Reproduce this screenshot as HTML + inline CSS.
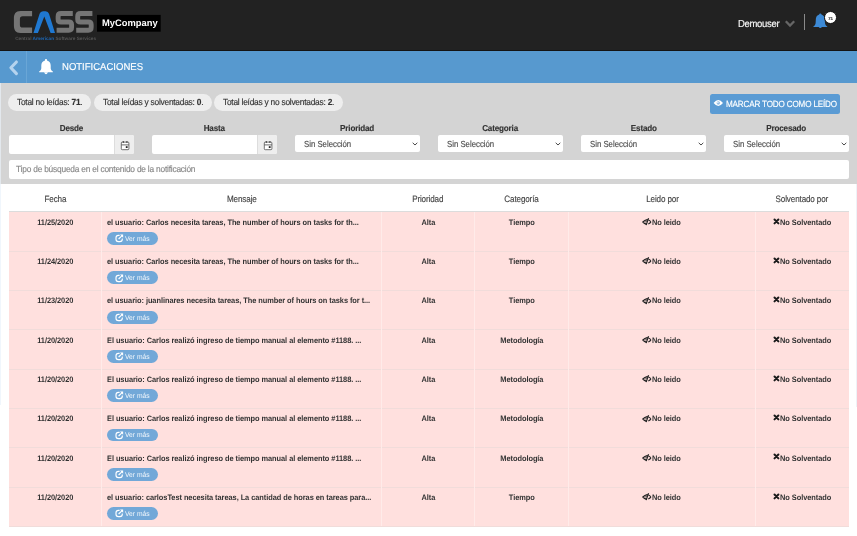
<!DOCTYPE html>
<html><head><meta charset="utf-8">
<style>
*{box-sizing:border-box;margin:0;padding:0}
html,body{width:857px;height:536px;overflow:hidden;background:#fff;font-family:"Liberation Sans",sans-serif;text-rendering:geometricPrecision;-webkit-text-stroke-width:0.15px}
.abs{position:absolute}
#top{position:absolute;left:0;top:0;width:857px;height:51px;background:#222;border-bottom:1px solid #141414}
#bar{position:absolute;left:0;top:51px;width:857px;height:32px;background:#5799cf}
#grey{position:absolute;left:0;top:83px;width:857px;height:101px;background:#d4d4d4}
.t{position:absolute;white-space:nowrap;line-height:1}
.pill{position:absolute;top:94px;height:17px;border-radius:9px;background:#eee;color:#333;font-size:8.9px;line-height:17.6px;padding-left:9px;white-space:nowrap}
.pill span{display:inline-block;transform:scaleX(0.94);transform-origin:0 50%;letter-spacing:-0.245px}
.lbl{position:absolute;top:123.9px;font-weight:bold;font-size:8.6px;color:#333;text-align:center;width:125px;line-height:8px;--sx:0.94;letter-spacing:-0.17px}
.sq{display:inline-block;transform:scaleX(var(--sx));transform-origin:50% 50%}
.sql{display:inline-block;transform:scaleX(var(--sx));transform-origin:0 50%}
.date{position:absolute;top:135px;height:19px;width:125px;background:#fff;border-radius:2px}
.date .add{position:absolute;right:0;top:0;width:19.7px;height:19px;background:#eee;border-left:1px solid #ddd;border-radius:0 2px 2px 0}
.sel{position:absolute;top:134.6px;height:17.8px;width:125px;background:#fff;border-radius:2px;font-size:8.9px;color:#4d4d4d;line-height:19.3px;padding-left:8.8px}
.sel svg{position:absolute;right:2px;top:7.6px}
#search{position:absolute;left:9px;top:160.2px;width:840px;height:18.4px;background:#fff;border-radius:2px;font-size:8.9px;color:#888;line-height:19.4px;padding-left:7px;white-space:nowrap;--sx:0.94;letter-spacing:-0.22px}
#thead{position:absolute;left:9px;top:184px;width:840px;height:28px;background:#fff;border-bottom:1px solid #dcdcdc}
.th{position:absolute;top:195px;font-size:9.2px;color:#444;text-align:center;line-height:8px;--sx:0.88;letter-spacing:-0.15px}
.row{position:absolute;left:9px;width:840px;height:39.4px;background:#ffe0de;border-top:1px solid #f1dcda}
.vd{position:absolute;top:212px;width:1px;height:314px;background:#ffebe9}
.c{position:absolute;-webkit-text-stroke-width:0;font-weight:bold;font-size:7.9px;color:#333;line-height:8px;white-space:nowrap;--sx:0.94;letter-spacing:-0.06px}
.ctr{text-align:center}
.ver{position:absolute;left:107px;width:51px;height:12.8px;border-radius:7px;background:#72a8d8;color:#f2f7fc;font-size:7.0px;line-height:12.8px;--sx:0.96;-webkit-text-stroke-width:0}
</style></head><body><div id="wrap" style="position:absolute;left:0;top:0;width:857px;height:536px;overflow:hidden;will-change:transform">
<div id="top"></div>
<!-- logo -->
<svg class="abs" style="left:0;top:0" width="170" height="50" viewBox="0 0 170 50">
 <path d="M32.1,10.9 H20.5 C15.6,10.9 13.9,13.8 13.9,18.6 V25.3 C13.9,30.1 15.6,33 20.5,33 H32.1 V27.6 H22.6 Q19.9,27.6 19.9,24.9 V19 Q19.9,16.3 22.6,16.3 H32.1 Z" fill="#757575"/>
 <path d="M33.5,33 L39.6,13.8 Q40.4,11.2 43,11.2 H45.6 Q48.2,11.2 49,13.8 L55,33 H50.6 L44.3,16.6 L37.9,33 Z" fill="#1f78d1"/>
 <path d="M72.8,13.5 H61 Q58.1,13.5 58.1,16.4 V19.2 Q58.1,22 61,22 H68.8 Q71.6,22 71.6,24.8 V27.3 Q71.6,30.2 68.8,30.2 H56.6" fill="none" stroke="#757575" stroke-width="4.9"/>
 <path d="M92.4,13.5 H80.6 Q77.7,13.5 77.7,16.4 V19.2 Q77.7,22 80.6,22 H88.4 Q91.2,22 91.2,24.8 V27.3 Q91.2,30.2 88.4,30.2 H76.2" fill="none" stroke="#757575" stroke-width="4.9"/>
 <text x="15.2" y="39.5" font-family="Liberation Sans" font-weight="bold" font-size="4.73" fill="#555">Central <tspan fill="#1d66b3">American</tspan> Software Services</text>
 <rect x="97" y="14.9" width="63.7" height="16.8" fill="#000"/>
 <text x="102" y="26.4" font-family="Liberation Sans" font-weight="bold" font-size="9.37" fill="#fff">MyCompany</text>
</svg>
<div class="t" style="left:737.6px;top:19.6px;font-size:10.2px;color:#fafafa;transform:scaleX(0.93);letter-spacing:-0.33px;-webkit-text-stroke:0.15px #fafafa;transform-origin:0 0">Demouser</div>
<svg class="abs" style="left:784px;top:19px" width="12" height="9" viewBox="0 0 12 9"><path d="M1.8,2.2 L6,6.5 L10.2,2.2" fill="none" stroke="#666" stroke-width="2.3"/></svg>
<div class="abs" style="left:804px;top:14px;width:1px;height:16px;background:#8a8a8a"></div>
<svg class="abs" style="left:808px;top:8px" width="24" height="24" viewBox="0 0 24 24">
 <circle cx="12.3" cy="6.5" r="1.1" fill="#3d8ad6"/>
 <path d="M12.3,6.6 C9.2,6.6 7.9,9 7.8,12 L7.6,15.2 C7.4,16.8 6.4,17.6 5.3,18.5 L5.4,19 H19.2 L19.3,18.5 C18.2,17.6 17.2,16.8 17,15.2 L16.8,12 C16.7,9 15.4,6.6 12.3,6.6 Z" fill="#3d8ad6"/>
 <path d="M10.4,18.6 Q12.3,21.6 14.2,18.6 Z" fill="#3d8ad6"/>
</svg>
<div class="abs" style="left:824.3px;top:11.1px;width:12.6px;height:12.6px;border-radius:50%;background:#fff;border:1px solid #111;color:#444;font-size:4.3px;font-weight:bold;text-align:center;line-height:13.4px">71</div>

<div id="bar"></div>
<div class="abs" style="left:26px;top:51px;width:1px;height:32px;background:#6aa6d6"></div>
<svg class="abs" style="left:0;top:51px" width="30" height="32" viewBox="0 0 30 32"><path d="M16.4,11 L10.9,16.8 L16.4,22.6" fill="none" stroke="#b5d3ee" stroke-width="3.1" stroke-linecap="round" stroke-linejoin="round"/></svg>
<svg class="abs" style="left:38px;top:58px" width="16" height="18" viewBox="0 0 16 18">
 <path d="M8,1 C7.4,1 7,1.4 7,2 V2.6 C4.6,3.1 3.3,5 3.3,7.6 V10.2 C3.3,11.8 2.2,12.7 1.1,13.5 V14.3 H14.9 V13.5 C13.8,12.7 12.7,11.8 12.7,10.2 V7.6 C12.7,5 11.4,3.1 9,2.6 V2 C9,1.4 8.6,1 8,1 Z" fill="#fff"/>
 <path d="M6,14.2 Q8,18.2 10,14.2 Z" fill="#fff"/>
</svg>
<div class="t" style="left:61.6px;top:62.9px;font-size:10.0px;color:#fff;--sx:0.953"><span class="sql">NOTIFICACIONES</span></div>

<div id="grey"></div>
<div class="abs" style="left:0;top:83px;width:1.2px;height:101px;background:#e3e8ed"></div>
<div class="pill" style="left:8.4px;width:83px"><span>Total no leídas: <b>71</b>.</span></div>
<div class="pill" style="left:93.6px;width:118.7px"><span>Total leídas y solventadas: <b>0</b>.</span></div>
<div class="pill" style="left:214.4px;width:129px"><span>Total leídas y no solventadas: <b>2</b>.</span></div>

<div class="abs" style="left:710px;top:94.2px;width:130px;height:19.6px;background:#5a9bd4;border-radius:2.5px"></div>
<svg class="abs" style="left:713px;top:99.4px" width="11" height="8" viewBox="0 0 11 8">
 <path d="M0.6,4 Q5.3,-1.8 10,4 Q5.3,9.8 0.6,4 Z" fill="#fff"/>
 <circle cx="5.3" cy="4" r="1.7" fill="#8fbbe3"/><circle cx="4.9" cy="3.6" r="0.7" fill="#fff"/>
</svg>
<div class="t" style="left:725.6px;top:100.2px;font-size:9.0px;color:#fff;--sx:0.9;letter-spacing:-0.18px"><span class="sql">MARCAR TODO COMO LEÍDO</span></div>

<div class="lbl" style="left:9px"><span class="sq">Desde</span></div>
<div class="lbl" style="left:152px"><span class="sq">Hasta</span></div>
<div class="lbl" style="left:295px"><span class="sq">Prioridad</span></div>
<div class="lbl" style="left:438px"><span class="sq">Categoria</span></div>
<div class="lbl" style="left:581px"><span class="sq">Estado</span></div>
<div class="lbl" style="left:724px"><span class="sq">Procesado</span></div>

<div class="date" style="left:9px"><div class="add"></div></div>
<div class="date" style="left:152px"><div class="add"></div></div>
<svg class="abs" style="left:120px;top:140px" width="10" height="11" viewBox="0 0 10 11"><rect x="1.3" y="2.1" width="7.6" height="7.6" rx="0.9" fill="#fff" stroke="#5a5a5a" stroke-width="0.85"/><path d="M1.3,4.9 H8.9" stroke="#5a5a5a" stroke-width="0.9"/><path d="M3.3,1 V3 M6.9,1 V3" stroke="#4a4a4a" stroke-width="1.1"/><rect x="5.8" y="6.2" width="1.8" height="1.8" fill="#222"/></svg>
<svg class="abs" style="left:263px;top:140px" width="10" height="11" viewBox="0 0 10 11"><rect x="1.3" y="2.1" width="7.6" height="7.6" rx="0.9" fill="#fff" stroke="#5a5a5a" stroke-width="0.85"/><path d="M1.3,4.9 H8.9" stroke="#5a5a5a" stroke-width="0.9"/><path d="M3.3,1 V3 M6.9,1 V3" stroke="#4a4a4a" stroke-width="1.1"/><rect x="5.8" y="6.2" width="1.8" height="1.8" fill="#222"/></svg>

<div class="sel" style="left:295px"><span style="display:inline-block;transform:scaleX(0.877);transform-origin:0 0">Sin Selección</span><svg width="6" height="4" viewBox="0 0 6 4"><path d="M0.7,0.8 L3,3 L5.3,0.8" fill="none" stroke="#333" stroke-width="0.9"/></svg></div>
<div class="sel" style="left:438px"><span style="display:inline-block;transform:scaleX(0.877);transform-origin:0 0">Sin Selección</span><svg width="6" height="4" viewBox="0 0 6 4"><path d="M0.7,0.8 L3,3 L5.3,0.8" fill="none" stroke="#333" stroke-width="0.9"/></svg></div>
<div class="sel" style="left:581px"><span style="display:inline-block;transform:scaleX(0.877);transform-origin:0 0">Sin Selección</span><svg width="6" height="4" viewBox="0 0 6 4"><path d="M0.7,0.8 L3,3 L5.3,0.8" fill="none" stroke="#333" stroke-width="0.9"/></svg></div>
<div class="sel" style="left:724px"><span style="display:inline-block;transform:scaleX(0.877);transform-origin:0 0">Sin Selección</span><svg width="6" height="4" viewBox="0 0 6 4"><path d="M0.7,0.8 L3,3 L5.3,0.8" fill="none" stroke="#333" stroke-width="0.9"/></svg></div>

<div id="search"><span class="sql">Tipo de búsqueda en el contenido de la notificación</span></div>

<div id="thead"></div>
<div class="abs" style="left:0;top:184px;width:1px;height:221px;background:#f0f6fc"></div>
<div class="abs" style="left:856px;top:184px;width:1px;height:223px;background:#eef2f7"></div>
<div class="th" style="left:9px;width:92.4px"><span class="sq">Fecha</span></div>
<div class="th" style="left:101.4px;width:280.4px"><span class="sq">Mensaje</span></div>
<div class="th" style="left:381.8px;width:92.5px"><span class="sq">Prioridad</span></div>
<div class="th" style="left:474.3px;width:94.3px"><span class="sq">Categoría</span></div>
<div class="th" style="left:568.6px;width:187px"><span class="sq">Leido por</span></div>
<div class="th" style="left:755.6px;width:93.4px"><span class="sq">Solventado por</span></div>

<div class="row" style="top:212px;height:38.880px;border-top:none"></div>
<div class="row" style="top:250.880px;height:39.280px"></div>
<div class="row" style="top:290.160px;height:39.280px"></div>
<div class="row" style="top:329.440px;height:39.280px"></div>
<div class="row" style="top:368.720px;height:39.280px"></div>
<div class="row" style="top:408.000px;height:39.280px"></div>
<div class="row" style="top:447.280px;height:39.280px"></div>
<div class="row" style="top:486.560px;height:39.440px"></div>
<div class="abs" style="left:9px;top:526px;width:840px;height:1px;background:#f1dcda"></div>
<div class="vd" style="left:100.9px"></div>
<div class="vd" style="left:381.3px"></div>
<div class="vd" style="left:473.8px"></div>
<div class="vd" style="left:568.1px"></div>
<div class="vd" style="left:755.1px"></div>
<div class="c ctr" style="left:9px;width:92.4px;top:218.90px"><span class="sq">11/25/2020</span></div>
<div class="c" style="left:107.3px;top:218.90px"><span class="sql">el usuario: Carlos necesita tareas, The number of hours on tasks for th...</span></div>
<div class="ver" style="top:232.20px"><svg width="9" height="9" viewBox="0 0 9 9" style="position:absolute;left:8.2px;top:2.1px"><path d="M4.6,1.3 H3.4 Q1,1.3 1,3.8 V5.2 Q1,7.6 3.4,7.6 H4.8 Q7.3,7.6 7.3,5.2 V4.4" fill="none" stroke="#fff" stroke-width="1.15"/><path d="M3.6,5 L7.4,1.3" fill="none" stroke="#fff" stroke-width="1.1"/><path d="M5,0.6 H8.1 V3.7 Z" fill="#fff"/></svg><span style="position:absolute;left:17.6px;top:1.9px"><span class="sql">Ver más</span></span></div>
<div class="c ctr" style="left:381.8px;width:92.5px;top:218.90px"><span class="sq">Alta</span></div>
<div class="c ctr" style="left:474.3px;width:94.3px;top:218.90px"><span class="sq">Tiempo</span></div>
<div class="c" style="left:652px;top:218.90px"><svg width="10" height="8" viewBox="0 0 10 8" style="position:absolute;left:-10.3px;top:-0.8px"><path d="M5.8,1.4 Q2.4,2.3 0.9,4 Q2.3,5.6 4.6,6.4" fill="none" stroke="#222" stroke-width="1.25"/><path d="M3.3,4 Q4.5,3 5.6,2.8" fill="none" stroke="#222" stroke-width="1"/><path d="M6.6,0.3 L4.1,7.1" stroke="#222" stroke-width="1.15"/><path d="M6.5,2 Q8.6,3 8.8,4 Q8.4,5 6.3,6" fill="none" stroke="#222" stroke-width="1.1"/></svg><span class="sql">No leido</span></div>
<div class="c" style="left:780px;top:218.90px"><svg width="7" height="7" viewBox="0 0 7 7" style="position:absolute;left:-7.5px;top:-1.1px"><path d="M1.5,1.5 L5.4,5.4 M5.4,1.5 L1.5,5.4" stroke="#1a1a1a" stroke-width="2.0" stroke-linecap="round"/></svg><span class="sql">No Solventado</span></div>
<div class="c ctr" style="left:9px;width:92.4px;top:258.18px"><span class="sq">11/24/2020</span></div>
<div class="c" style="left:107.3px;top:258.18px"><span class="sql">el usuario: Carlos necesita tareas, The number of hours on tasks for th...</span></div>
<div class="ver" style="top:271.48px"><svg width="9" height="9" viewBox="0 0 9 9" style="position:absolute;left:8.2px;top:2.1px"><path d="M4.6,1.3 H3.4 Q1,1.3 1,3.8 V5.2 Q1,7.6 3.4,7.6 H4.8 Q7.3,7.6 7.3,5.2 V4.4" fill="none" stroke="#fff" stroke-width="1.15"/><path d="M3.6,5 L7.4,1.3" fill="none" stroke="#fff" stroke-width="1.1"/><path d="M5,0.6 H8.1 V3.7 Z" fill="#fff"/></svg><span style="position:absolute;left:17.6px;top:1.9px"><span class="sql">Ver más</span></span></div>
<div class="c ctr" style="left:381.8px;width:92.5px;top:258.18px"><span class="sq">Alta</span></div>
<div class="c ctr" style="left:474.3px;width:94.3px;top:258.18px"><span class="sq">Tiempo</span></div>
<div class="c" style="left:652px;top:258.18px"><svg width="10" height="8" viewBox="0 0 10 8" style="position:absolute;left:-10.3px;top:-0.8px"><path d="M5.8,1.4 Q2.4,2.3 0.9,4 Q2.3,5.6 4.6,6.4" fill="none" stroke="#222" stroke-width="1.25"/><path d="M3.3,4 Q4.5,3 5.6,2.8" fill="none" stroke="#222" stroke-width="1"/><path d="M6.6,0.3 L4.1,7.1" stroke="#222" stroke-width="1.15"/><path d="M6.5,2 Q8.6,3 8.8,4 Q8.4,5 6.3,6" fill="none" stroke="#222" stroke-width="1.1"/></svg><span class="sql">No leido</span></div>
<div class="c" style="left:780px;top:258.18px"><svg width="7" height="7" viewBox="0 0 7 7" style="position:absolute;left:-7.5px;top:-1.1px"><path d="M1.5,1.5 L5.4,5.4 M5.4,1.5 L1.5,5.4" stroke="#1a1a1a" stroke-width="2.0" stroke-linecap="round"/></svg><span class="sql">No Solventado</span></div>
<div class="c ctr" style="left:9px;width:92.4px;top:297.46px"><span class="sq">11/23/2020</span></div>
<div class="c" style="left:107.3px;top:297.46px"><span class="sql">el usuario: juanlinares necesita tareas, The number of hours on tasks for t...</span></div>
<div class="ver" style="top:310.76px"><svg width="9" height="9" viewBox="0 0 9 9" style="position:absolute;left:8.2px;top:2.1px"><path d="M4.6,1.3 H3.4 Q1,1.3 1,3.8 V5.2 Q1,7.6 3.4,7.6 H4.8 Q7.3,7.6 7.3,5.2 V4.4" fill="none" stroke="#fff" stroke-width="1.15"/><path d="M3.6,5 L7.4,1.3" fill="none" stroke="#fff" stroke-width="1.1"/><path d="M5,0.6 H8.1 V3.7 Z" fill="#fff"/></svg><span style="position:absolute;left:17.6px;top:1.9px"><span class="sql">Ver más</span></span></div>
<div class="c ctr" style="left:381.8px;width:92.5px;top:297.46px"><span class="sq">Alta</span></div>
<div class="c ctr" style="left:474.3px;width:94.3px;top:297.46px"><span class="sq">Tiempo</span></div>
<div class="c" style="left:652px;top:297.46px"><svg width="10" height="8" viewBox="0 0 10 8" style="position:absolute;left:-10.3px;top:-0.8px"><path d="M5.8,1.4 Q2.4,2.3 0.9,4 Q2.3,5.6 4.6,6.4" fill="none" stroke="#222" stroke-width="1.25"/><path d="M3.3,4 Q4.5,3 5.6,2.8" fill="none" stroke="#222" stroke-width="1"/><path d="M6.6,0.3 L4.1,7.1" stroke="#222" stroke-width="1.15"/><path d="M6.5,2 Q8.6,3 8.8,4 Q8.4,5 6.3,6" fill="none" stroke="#222" stroke-width="1.1"/></svg><span class="sql">No leido</span></div>
<div class="c" style="left:780px;top:297.46px"><svg width="7" height="7" viewBox="0 0 7 7" style="position:absolute;left:-7.5px;top:-1.1px"><path d="M1.5,1.5 L5.4,5.4 M5.4,1.5 L1.5,5.4" stroke="#1a1a1a" stroke-width="2.0" stroke-linecap="round"/></svg><span class="sql">No Solventado</span></div>
<div class="c ctr" style="left:9px;width:92.4px;top:336.74px"><span class="sq">11/20/2020</span></div>
<div class="c" style="left:107.3px;top:336.74px"><span class="sql">El usuario: Carlos realizó ingreso de tiempo manual al elemento #1188. ...</span></div>
<div class="ver" style="top:350.04px"><svg width="9" height="9" viewBox="0 0 9 9" style="position:absolute;left:8.2px;top:2.1px"><path d="M4.6,1.3 H3.4 Q1,1.3 1,3.8 V5.2 Q1,7.6 3.4,7.6 H4.8 Q7.3,7.6 7.3,5.2 V4.4" fill="none" stroke="#fff" stroke-width="1.15"/><path d="M3.6,5 L7.4,1.3" fill="none" stroke="#fff" stroke-width="1.1"/><path d="M5,0.6 H8.1 V3.7 Z" fill="#fff"/></svg><span style="position:absolute;left:17.6px;top:1.9px"><span class="sql">Ver más</span></span></div>
<div class="c ctr" style="left:381.8px;width:92.5px;top:336.74px"><span class="sq">Alta</span></div>
<div class="c ctr" style="left:474.3px;width:94.3px;top:336.74px"><span class="sq">Metodología</span></div>
<div class="c" style="left:652px;top:336.74px"><svg width="10" height="8" viewBox="0 0 10 8" style="position:absolute;left:-10.3px;top:-0.8px"><path d="M5.8,1.4 Q2.4,2.3 0.9,4 Q2.3,5.6 4.6,6.4" fill="none" stroke="#222" stroke-width="1.25"/><path d="M3.3,4 Q4.5,3 5.6,2.8" fill="none" stroke="#222" stroke-width="1"/><path d="M6.6,0.3 L4.1,7.1" stroke="#222" stroke-width="1.15"/><path d="M6.5,2 Q8.6,3 8.8,4 Q8.4,5 6.3,6" fill="none" stroke="#222" stroke-width="1.1"/></svg><span class="sql">No leido</span></div>
<div class="c" style="left:780px;top:336.74px"><svg width="7" height="7" viewBox="0 0 7 7" style="position:absolute;left:-7.5px;top:-1.1px"><path d="M1.5,1.5 L5.4,5.4 M5.4,1.5 L1.5,5.4" stroke="#1a1a1a" stroke-width="2.0" stroke-linecap="round"/></svg><span class="sql">No Solventado</span></div>
<div class="c ctr" style="left:9px;width:92.4px;top:376.02px"><span class="sq">11/20/2020</span></div>
<div class="c" style="left:107.3px;top:376.02px"><span class="sql">El usuario: Carlos realizó ingreso de tiempo manual al elemento #1188. ...</span></div>
<div class="ver" style="top:389.32px"><svg width="9" height="9" viewBox="0 0 9 9" style="position:absolute;left:8.2px;top:2.1px"><path d="M4.6,1.3 H3.4 Q1,1.3 1,3.8 V5.2 Q1,7.6 3.4,7.6 H4.8 Q7.3,7.6 7.3,5.2 V4.4" fill="none" stroke="#fff" stroke-width="1.15"/><path d="M3.6,5 L7.4,1.3" fill="none" stroke="#fff" stroke-width="1.1"/><path d="M5,0.6 H8.1 V3.7 Z" fill="#fff"/></svg><span style="position:absolute;left:17.6px;top:1.9px"><span class="sql">Ver más</span></span></div>
<div class="c ctr" style="left:381.8px;width:92.5px;top:376.02px"><span class="sq">Alta</span></div>
<div class="c ctr" style="left:474.3px;width:94.3px;top:376.02px"><span class="sq">Metodología</span></div>
<div class="c" style="left:652px;top:376.02px"><svg width="10" height="8" viewBox="0 0 10 8" style="position:absolute;left:-10.3px;top:-0.8px"><path d="M5.8,1.4 Q2.4,2.3 0.9,4 Q2.3,5.6 4.6,6.4" fill="none" stroke="#222" stroke-width="1.25"/><path d="M3.3,4 Q4.5,3 5.6,2.8" fill="none" stroke="#222" stroke-width="1"/><path d="M6.6,0.3 L4.1,7.1" stroke="#222" stroke-width="1.15"/><path d="M6.5,2 Q8.6,3 8.8,4 Q8.4,5 6.3,6" fill="none" stroke="#222" stroke-width="1.1"/></svg><span class="sql">No leido</span></div>
<div class="c" style="left:780px;top:376.02px"><svg width="7" height="7" viewBox="0 0 7 7" style="position:absolute;left:-7.5px;top:-1.1px"><path d="M1.5,1.5 L5.4,5.4 M5.4,1.5 L1.5,5.4" stroke="#1a1a1a" stroke-width="2.0" stroke-linecap="round"/></svg><span class="sql">No Solventado</span></div>
<div class="c ctr" style="left:9px;width:92.4px;top:415.30px"><span class="sq">11/20/2020</span></div>
<div class="c" style="left:107.3px;top:415.30px"><span class="sql">El usuario: Carlos realizó ingreso de tiempo manual al elemento #1188. ...</span></div>
<div class="ver" style="top:428.60px"><svg width="9" height="9" viewBox="0 0 9 9" style="position:absolute;left:8.2px;top:2.1px"><path d="M4.6,1.3 H3.4 Q1,1.3 1,3.8 V5.2 Q1,7.6 3.4,7.6 H4.8 Q7.3,7.6 7.3,5.2 V4.4" fill="none" stroke="#fff" stroke-width="1.15"/><path d="M3.6,5 L7.4,1.3" fill="none" stroke="#fff" stroke-width="1.1"/><path d="M5,0.6 H8.1 V3.7 Z" fill="#fff"/></svg><span style="position:absolute;left:17.6px;top:1.9px"><span class="sql">Ver más</span></span></div>
<div class="c ctr" style="left:381.8px;width:92.5px;top:415.30px"><span class="sq">Alta</span></div>
<div class="c ctr" style="left:474.3px;width:94.3px;top:415.30px"><span class="sq">Metodología</span></div>
<div class="c" style="left:652px;top:415.30px"><svg width="10" height="8" viewBox="0 0 10 8" style="position:absolute;left:-10.3px;top:-0.8px"><path d="M5.8,1.4 Q2.4,2.3 0.9,4 Q2.3,5.6 4.6,6.4" fill="none" stroke="#222" stroke-width="1.25"/><path d="M3.3,4 Q4.5,3 5.6,2.8" fill="none" stroke="#222" stroke-width="1"/><path d="M6.6,0.3 L4.1,7.1" stroke="#222" stroke-width="1.15"/><path d="M6.5,2 Q8.6,3 8.8,4 Q8.4,5 6.3,6" fill="none" stroke="#222" stroke-width="1.1"/></svg><span class="sql">No leido</span></div>
<div class="c" style="left:780px;top:415.30px"><svg width="7" height="7" viewBox="0 0 7 7" style="position:absolute;left:-7.5px;top:-1.1px"><path d="M1.5,1.5 L5.4,5.4 M5.4,1.5 L1.5,5.4" stroke="#1a1a1a" stroke-width="2.0" stroke-linecap="round"/></svg><span class="sql">No Solventado</span></div>
<div class="c ctr" style="left:9px;width:92.4px;top:454.58px"><span class="sq">11/20/2020</span></div>
<div class="c" style="left:107.3px;top:454.58px"><span class="sql">El usuario: Carlos realizó ingreso de tiempo manual al elemento #1188. ...</span></div>
<div class="ver" style="top:467.88px"><svg width="9" height="9" viewBox="0 0 9 9" style="position:absolute;left:8.2px;top:2.1px"><path d="M4.6,1.3 H3.4 Q1,1.3 1,3.8 V5.2 Q1,7.6 3.4,7.6 H4.8 Q7.3,7.6 7.3,5.2 V4.4" fill="none" stroke="#fff" stroke-width="1.15"/><path d="M3.6,5 L7.4,1.3" fill="none" stroke="#fff" stroke-width="1.1"/><path d="M5,0.6 H8.1 V3.7 Z" fill="#fff"/></svg><span style="position:absolute;left:17.6px;top:1.9px"><span class="sql">Ver más</span></span></div>
<div class="c ctr" style="left:381.8px;width:92.5px;top:454.58px"><span class="sq">Alta</span></div>
<div class="c ctr" style="left:474.3px;width:94.3px;top:454.58px"><span class="sq">Metodología</span></div>
<div class="c" style="left:652px;top:454.58px"><svg width="10" height="8" viewBox="0 0 10 8" style="position:absolute;left:-10.3px;top:-0.8px"><path d="M5.8,1.4 Q2.4,2.3 0.9,4 Q2.3,5.6 4.6,6.4" fill="none" stroke="#222" stroke-width="1.25"/><path d="M3.3,4 Q4.5,3 5.6,2.8" fill="none" stroke="#222" stroke-width="1"/><path d="M6.6,0.3 L4.1,7.1" stroke="#222" stroke-width="1.15"/><path d="M6.5,2 Q8.6,3 8.8,4 Q8.4,5 6.3,6" fill="none" stroke="#222" stroke-width="1.1"/></svg><span class="sql">No leido</span></div>
<div class="c" style="left:780px;top:454.58px"><svg width="7" height="7" viewBox="0 0 7 7" style="position:absolute;left:-7.5px;top:-1.1px"><path d="M1.5,1.5 L5.4,5.4 M5.4,1.5 L1.5,5.4" stroke="#1a1a1a" stroke-width="2.0" stroke-linecap="round"/></svg><span class="sql">No Solventado</span></div>
<div class="c ctr" style="left:9px;width:92.4px;top:493.86px"><span class="sq">11/20/2020</span></div>
<div class="c" style="left:107.3px;top:493.86px"><span class="sql">el usuario: carlosTest necesita tareas, La cantidad de horas en tareas para...</span></div>
<div class="ver" style="top:507.16px"><svg width="9" height="9" viewBox="0 0 9 9" style="position:absolute;left:8.2px;top:2.1px"><path d="M4.6,1.3 H3.4 Q1,1.3 1,3.8 V5.2 Q1,7.6 3.4,7.6 H4.8 Q7.3,7.6 7.3,5.2 V4.4" fill="none" stroke="#fff" stroke-width="1.15"/><path d="M3.6,5 L7.4,1.3" fill="none" stroke="#fff" stroke-width="1.1"/><path d="M5,0.6 H8.1 V3.7 Z" fill="#fff"/></svg><span style="position:absolute;left:17.6px;top:1.9px"><span class="sql">Ver más</span></span></div>
<div class="c ctr" style="left:381.8px;width:92.5px;top:493.86px"><span class="sq">Alta</span></div>
<div class="c ctr" style="left:474.3px;width:94.3px;top:493.86px"><span class="sq">Tiempo</span></div>
<div class="c" style="left:652px;top:493.86px"><svg width="10" height="8" viewBox="0 0 10 8" style="position:absolute;left:-10.3px;top:-0.8px"><path d="M5.8,1.4 Q2.4,2.3 0.9,4 Q2.3,5.6 4.6,6.4" fill="none" stroke="#222" stroke-width="1.25"/><path d="M3.3,4 Q4.5,3 5.6,2.8" fill="none" stroke="#222" stroke-width="1"/><path d="M6.6,0.3 L4.1,7.1" stroke="#222" stroke-width="1.15"/><path d="M6.5,2 Q8.6,3 8.8,4 Q8.4,5 6.3,6" fill="none" stroke="#222" stroke-width="1.1"/></svg><span class="sql">No leido</span></div>
<div class="c" style="left:780px;top:493.86px"><svg width="7" height="7" viewBox="0 0 7 7" style="position:absolute;left:-7.5px;top:-1.1px"><path d="M1.5,1.5 L5.4,5.4 M5.4,1.5 L1.5,5.4" stroke="#1a1a1a" stroke-width="2.0" stroke-linecap="round"/></svg><span class="sql">No Solventado</span></div>
</div></body></html>
